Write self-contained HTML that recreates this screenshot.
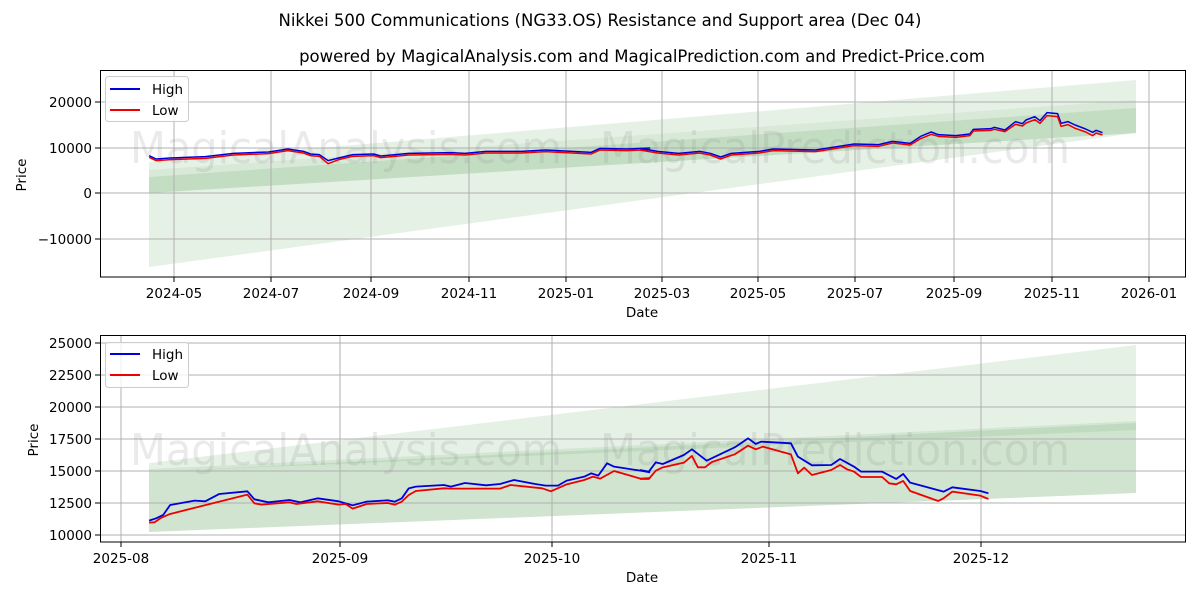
<!DOCTYPE html>
<html><head><meta charset="utf-8"><style>
html,body{margin:0;padding:0;background:#fff;}
svg{display:block;font-family:"DejaVu Sans","Liberation Sans",sans-serif;}
</style></head><body>
<svg width="1200" height="600" viewBox="0 0 1200 600" xmlns="http://www.w3.org/2000/svg">
<rect width="1200" height="600" fill="#fff"/>
<text x="600" y="26" font-size="16.5" text-anchor="middle">Nikkei 500 Communications (NG33.OS) Resistance and Support area (Dec 04)</text>
<text x="642" y="62" font-size="16.5" text-anchor="middle">powered by MagicalAnalysis.com and MagicalPrediction.com and Predict-Price.com</text>

<!-- TOP CHART -->
<g>
<polygon points="149,162 1136,80 1136,133 149,267" fill="#2e8b2e" fill-opacity="0.12"/>
<polygon points="149,170 1136,100 1136,133 149,193" fill="#2e8b2e" fill-opacity="0.08"/>
<polygon points="149,177 1136,108 1136,133 149,193" fill="#2e8b2e" fill-opacity="0.12"/>
<g stroke="#b0b0b0" stroke-width="1">
<line x1="100" x2="1186" y1="102" y2="102"/><line x1="100" x2="1186" y1="148" y2="148"/><line x1="100" x2="1186" y1="193" y2="193"/><line x1="100" x2="1186" y1="239" y2="239"/>
<line y1="70" y2="277" x1="174" x2="174"/><line y1="70" y2="277" x1="271" x2="271"/><line y1="70" y2="277" x1="371" x2="371"/><line y1="70" y2="277" x1="469" x2="469"/><line y1="70" y2="277" x1="566" x2="566"/><line y1="70" y2="277" x1="662" x2="662"/><line y1="70" y2="277" x1="758" x2="758"/><line y1="70" y2="277" x1="855" x2="855"/><line y1="70" y2="277" x1="954" x2="954"/><line y1="70" y2="277" x1="1052" x2="1052"/><line y1="70" y2="277" x1="1149" x2="1149"/>
</g>
<text x="130" y="163" font-size="44" fill="#888" fill-opacity="0.18" textLength="432" lengthAdjust="spacingAndGlyphs">MagicalAnalysis.com</text>
<text x="600" y="163" font-size="44" fill="#888" fill-opacity="0.18" textLength="470" lengthAdjust="spacingAndGlyphs">MagicalPrediction.com</text>
<g transform="translate(100,65) scale(0.3509,0.3333)" fill="none" stroke-linejoin="round">
<polyline vector-effect="non-scaling-stroke" stroke="#0000dd" stroke-width="1.5" points="140,272 160,282 200,279 300,275 380,265 480,261 535,252 580,259 600,267 625,269 650,287 680,279 720,269 780,267 800,273 880,265 1000,263 1040,265 1100,259 1200,259 1270,255 1400,262 1425,250 1500,252 1568,249"/>
<polyline vector-effect="non-scaling-stroke" stroke="#ee0000" stroke-width="1.5" points="140,277 160,287 200,284 300,280 380,270 480,266 535,257 580,264 600,272 625,274 650,296 680,284 720,274 780,272 800,278 880,270 1000,268 1040,270 1100,264 1200,264 1270,260 1400,267 1425,255 1500,257 1568,254"/>
</g>
<g transform="translate(640,65) scale(0.3509,0.3333)" fill="none" stroke-linejoin="round">
<polyline vector-effect="non-scaling-stroke" stroke="#0000dd" stroke-width="1.5" points="0,250 50,259 110,265 170,259 200,265 230,276 260,265 340,259 380,252 500,255 610,237 680,239 720,229 770,235 800,214 830,201 850,209 900,212 940,207 950,193 1000,191 1010,187 1040,195 1070,170 1090,176 1100,165 1125,155 1140,167 1160,143 1190,146 1200,175 1220,170 1240,180 1270,192 1290,202 1300,196 1318,203"/>
<polyline vector-effect="non-scaling-stroke" stroke="#ee0000" stroke-width="1.5" points="0,255 50,264 110,270 170,264 200,270 230,282 260,270 340,264 380,257 500,260 610,242 680,244 720,234 770,240 800,221 830,208 850,214 900,217 940,212 950,198 1000,196 1010,193 1040,200 1070,178 1090,183 1100,174 1125,164 1140,175 1160,152 1190,155 1200,184 1220,179 1240,190 1270,201 1290,212 1300,204 1318,210"/>
</g>
<rect x="100.5" y="70.5" width="1085" height="206.5" fill="none" stroke="#000" stroke-width="1"/>
<g stroke="#000"><line x1="95" x2="100" y1="102" y2="102"/><line x1="95" x2="100" y1="148" y2="148"/><line x1="95" x2="100" y1="193" y2="193"/><line x1="95" x2="100" y1="239" y2="239"/>
<line y1="277" y2="282" x1="174" x2="174"/><line y1="277" y2="282" x1="271" x2="271"/><line y1="277" y2="282" x1="371" x2="371"/><line y1="277" y2="282" x1="469" x2="469"/><line y1="277" y2="282" x1="566" x2="566"/><line y1="277" y2="282" x1="662" x2="662"/><line y1="277" y2="282" x1="758" x2="758"/><line y1="277" y2="282" x1="855" x2="855"/><line y1="277" y2="282" x1="954" x2="954"/><line y1="277" y2="282" x1="1052" x2="1052"/><line y1="277" y2="282" x1="1149" x2="1149"/></g>
<g font-size="13.5" text-anchor="end"><text x="92" y="107">20000</text><text x="92" y="153">10000</text><text x="92" y="198">0</text><text x="92" y="244">−10000</text></g>
<g font-size="13.5" text-anchor="middle"><text x="174" y="298">2024-05</text><text x="271" y="298">2024-07</text><text x="371" y="298">2024-09</text><text x="469" y="298">2024-11</text><text x="566" y="298">2025-01</text><text x="662" y="298">2025-03</text><text x="758" y="298">2025-05</text><text x="855" y="298">2025-07</text><text x="954" y="298">2025-09</text><text x="1052" y="298">2025-11</text><text x="1149" y="298">2026-01</text>
<text x="642" y="317">Date</text></g>
<text font-size="13.5" text-anchor="middle" transform="translate(26,175) rotate(-90)">Price</text>
<rect x="105.5" y="76.5" width="83" height="45" rx="3" fill="#fff" fill-opacity="0.8" stroke="#ccc"/>
<line x1="110" x2="140" y1="89" y2="89" stroke="#0000dd" stroke-width="2"/>
<line x1="110" x2="140" y1="110" y2="110" stroke="#ee0000" stroke-width="2"/>
<text x="152" y="94" font-size="13.5">High</text><text x="152" y="115" font-size="13.5">Low</text>
</g>

<!-- BOTTOM CHART -->
<g>
<polygon points="149,463 1136,345 1136,493 149,532" fill="#2e8b2e" fill-opacity="0.12"/>
<polygon points="149,472 1136,423 1136,493 149,532" fill="#2e8b2e" fill-opacity="0.12"/>
<polygon points="149,469 1136,421 1136,430 149,472" fill="#2e8b2e" fill-opacity="0.1"/>
<g stroke="#b0b0b0" stroke-width="1">
<line x1="100" x2="1186" y1="343" y2="343"/><line x1="100" x2="1186" y1="375" y2="375"/><line x1="100" x2="1186" y1="407" y2="407"/><line x1="100" x2="1186" y1="439" y2="439"/><line x1="100" x2="1186" y1="471" y2="471"/><line x1="100" x2="1186" y1="503" y2="503"/><line x1="100" x2="1186" y1="535" y2="535"/>
<line y1="335" y2="542" x1="121" x2="121"/><line y1="335" y2="542" x1="340" x2="340"/><line y1="335" y2="542" x1="552" x2="552"/><line y1="335" y2="542" x1="769" x2="769"/><line y1="335" y2="542" x1="981" x2="981"/>
</g>
<text x="130" y="465" font-size="44" fill="#888" fill-opacity="0.18" textLength="432" lengthAdjust="spacingAndGlyphs">MagicalAnalysis.com</text>
<text x="600" y="465" font-size="44" fill="#888" fill-opacity="0.18" textLength="470" lengthAdjust="spacingAndGlyphs">MagicalPrediction.com</text>
<g transform="translate(100,330) scale(0.3509,0.3333)" fill="none" stroke-linejoin="round">
<polyline vector-effect="non-scaling-stroke" stroke="#0000dd" stroke-width="1.8" points="140,572 160,565 180,555 200,525 270,512 300,514 340,492 420,484 440,508 480,517 540,510 570,517 620,505 680,514 720,526 760,515 820,511 840,515 860,505 880,475 900,470 980,465 1000,470 1040,459 1100,466 1140,462 1180,450 1240,462 1270,467 1305,467 1330,452 1380,440 1400,430 1420,437 1445,400 1465,410 1540,422 1568,427"/>
<polyline vector-effect="non-scaling-stroke" stroke="#ee0000" stroke-width="1.8" points="140,578 155,577 175,563 200,552 320,520 420,494 440,520 460,524 540,517 560,522 620,514 680,524 700,522 720,536 760,522 820,519 840,524 860,515 880,495 900,483 980,475 1000,476 1100,476 1140,476 1170,465 1260,475 1285,484 1330,463 1380,450 1405,440 1425,446 1465,423 1540,446 1568,444"/>
</g>
<g transform="translate(640,330) scale(0.3509,0.3333)" fill="none" stroke-linejoin="round">
<polyline vector-effect="non-scaling-stroke" stroke="#0000dd" stroke-width="1.8" points="0,420 25,425 45,397 65,402 125,375 148,358 190,392 270,352 308,325 330,342 345,335 430,340 450,380 490,406 545,405 570,387 610,410 630,425 690,425 730,447 750,432 770,458 865,485 890,472 970,483 993,490"/>
<polyline vector-effect="non-scaling-stroke" stroke="#ee0000" stroke-width="1.8" points="0,447 25,447 45,422 65,412 125,398 148,378 165,412 185,412 205,396 270,373 308,347 330,358 350,350 430,373 450,430 468,413 490,435 545,420 570,405 590,418 610,425 630,441 690,441 710,460 730,463 750,453 770,483 850,513 865,505 890,485 970,497 993,507"/>
</g>
<rect x="100.5" y="335.5" width="1085" height="206.5" fill="none" stroke="#000" stroke-width="1"/>
<g stroke="#000"><line x1="95" x2="100" y1="343" y2="343"/><line x1="95" x2="100" y1="375" y2="375"/><line x1="95" x2="100" y1="407" y2="407"/><line x1="95" x2="100" y1="439" y2="439"/><line x1="95" x2="100" y1="471" y2="471"/><line x1="95" x2="100" y1="503" y2="503"/><line x1="95" x2="100" y1="535" y2="535"/>
<line y1="542" y2="547" x1="121" x2="121"/><line y1="542" y2="547" x1="340" x2="340"/><line y1="542" y2="547" x1="552" x2="552"/><line y1="542" y2="547" x1="769" x2="769"/><line y1="542" y2="547" x1="981" x2="981"/></g>
<g font-size="13.5" text-anchor="end"><text x="92" y="348">25000</text><text x="92" y="380">22500</text><text x="92" y="412">20000</text><text x="92" y="444">17500</text><text x="92" y="476">15000</text><text x="92" y="508">12500</text><text x="92" y="540">10000</text></g>
<g font-size="13.5" text-anchor="middle"><text x="121" y="563">2025-08</text><text x="340" y="563">2025-09</text><text x="552" y="563">2025-10</text><text x="769" y="563">2025-11</text><text x="981" y="563">2025-12</text>
<text x="642" y="582">Date</text></g>
<text font-size="13.5" text-anchor="middle" transform="translate(38,440) rotate(-90)">Price</text>
<rect x="105.5" y="342.5" width="83" height="45" rx="3" fill="#fff" fill-opacity="0.8" stroke="#ccc"/>
<line x1="110" x2="140" y1="354" y2="354" stroke="#0000dd" stroke-width="2"/>
<line x1="110" x2="140" y1="375" y2="375" stroke="#ee0000" stroke-width="2"/>
<text x="152" y="359" font-size="13.5">High</text><text x="152" y="380" font-size="13.5">Low</text>
</g>
</svg>
</body></html>
